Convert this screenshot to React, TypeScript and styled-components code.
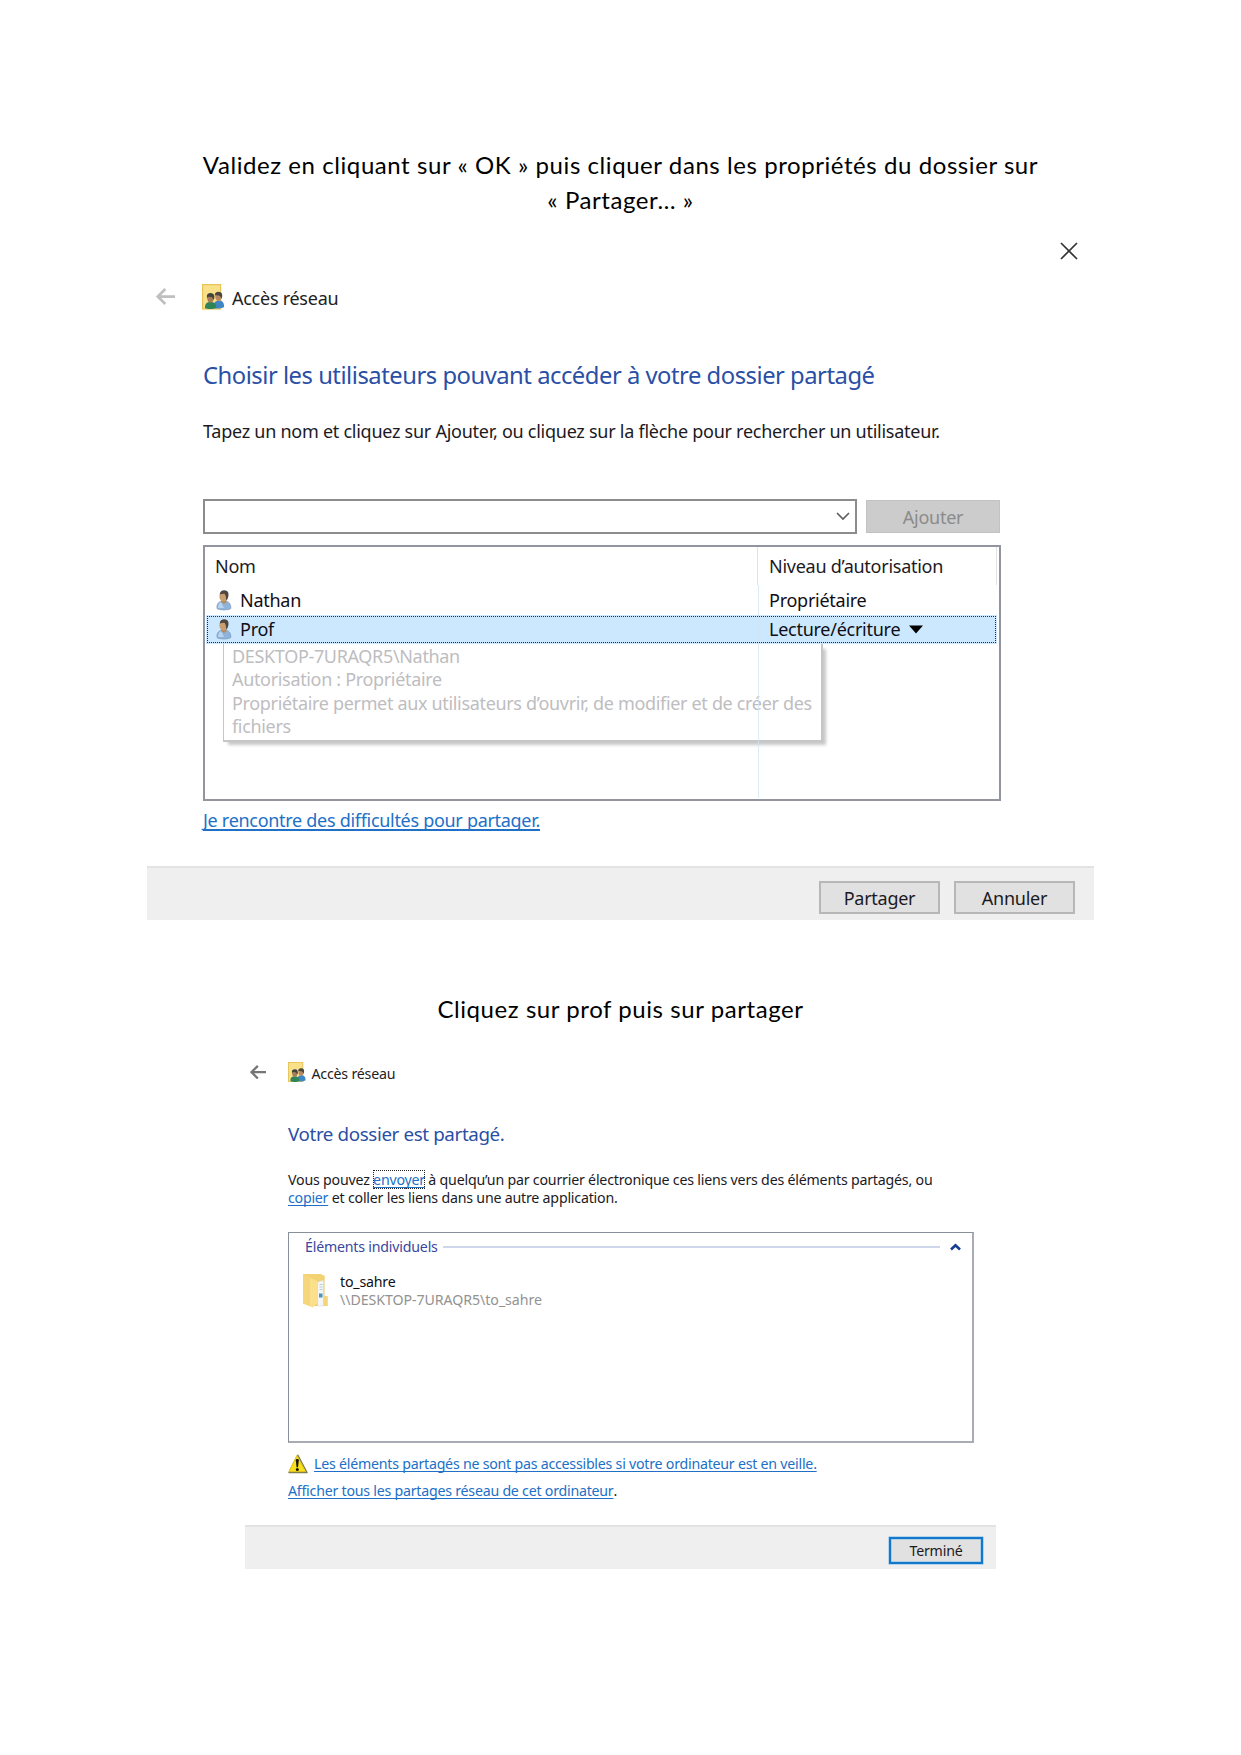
import React from 'react';
import styled, { createGlobalStyle, css } from 'styled-components';

const ui = css`
  font-family: 'Noto Sans', 'Open Sans', sans-serif;
  letter-spacing: -0.0145em;
  font-variant-ligatures: none;
`;

const GlobalStyle = createGlobalStyle`
  *, *::before, *::after { box-sizing: border-box; }
  body { margin: 0; background: #fff; }
  p, h1, h2 { margin: 0; font-weight: 400; }
`;

const Page = styled.main`
  width: 1241px;
  height: 1755px;
  padding-top: 147px;
  background: #fff;
  overflow: hidden;
`;

const Caption = styled.p`
  font-family: Lato, sans-serif;
  font-size: 24px;
  height: 70px;
  line-height: 35px;
  letter-spacing: 0.57px;
  text-align: center;
  color: #000;
  white-space: nowrap;
`;

const LowerCaption = styled(Caption)`
  height: 35px;
  margin-top: 71px;
`;

/* ---------- shared dialog parts ---------- */

const Dialog = styled.section<{ $left: number; $width: number; $size: number }>`
  ${ui}
  display: flex;
  flex-direction: column;
  margin-left: ${(p) => p.$left}px;
  width: ${(p) => p.$width}px;
  font-size: ${(p) => p.$size}px;
  color: #1c1a1f;
  white-space: nowrap;
`;

const CloseBar = styled.div`
  display: flex;
  justify-content: flex-end;
  align-items: center;
  height: 67px;
  padding-right: 16px;
`;

const Header = styled.header<{ $height: number; $indent: number; $arrowCol: number; $gap: number; $top?: number }>`
  display: grid;
  grid-template-columns: ${(p) => p.$arrowCol}px auto 1fr;
  align-items: center;
  height: ${(p) => p.$height}px;
  margin-top: ${(p) => p.$top ?? 0}px;
  padding-left: ${(p) => p.$indent}px;
  svg { display: block; }
  span { padding: 2px 0 0 ${(p) => p.$gap}px; color: #222; }
`;

const Body = styled.div<{ $indent: number; $height: number }>`
  display: flex;
  flex-direction: column;
  align-items: flex-start;
  padding-left: ${(p) => p.$indent}px;
  height: ${(p) => p.$height}px;
`;

const Title = styled.h1<{ $size: number; $line: number; $top: number }>`
  margin-top: ${(p) => p.$top}px;
  font-size: ${(p) => p.$size}px;
  line-height: ${(p) => p.$line}px;
  letter-spacing: -0.0205em;
  color: #2a4fa5;
`;

const Text = styled.p<{ $line: number; $top: number }>`
  margin-top: ${(p) => p.$top}px;
  line-height: ${(p) => p.$line}px;
`;

const Link = styled.a<{ $thick?: number }>`
  color: #2170c8;
  letter-spacing: -0.0165em;
  text-decoration: underline;
  text-decoration-thickness: ${(p) => p.$thick ?? 1}px;
  text-decoration-skip-ink: none;
  text-underline-offset: 2px;
`;

const FocusLink = styled(Link)`
  outline: 1px dotted #222;
  outline-offset: -1px;
`;

const Footer = styled.footer<{ $height: number; $top: number; $right: number; $gap?: number }>`
  display: flex;
  justify-content: flex-end;
  gap: ${(p) => p.$gap ?? 0}px;
  height: ${(p) => p.$height}px;
  padding: ${(p) => p.$top}px ${(p) => p.$right}px 0 0;
  border-top: 2px solid #e3e3e3;
  background: #efefef;
`;

const Button = styled.button<{ $w: number; $h: number; $kind?: 'disabled' | 'default' }>`
  ${ui}
  display: flex;
  align-items: center;
  justify-content: center;
  width: ${(p) => p.$w}px;
  height: ${(p) => p.$h}px;
  padding: 1px 0 0;
  font-size: inherit;
  line-height: 1;
  color: #1c1a1f;
  background: #e1e1e1;
  border: 2px solid #b7b7b7;
  border-radius: 0;
  ${(p) =>
    p.$kind === 'disabled' &&
    css`
      color: #8b8b8b;
      background: #cccccc;
      border: 1px solid #c2c2c2;
    `}
  ${(p) =>
    p.$kind === 'default' &&
    css`
      border: 2px solid #1377ca;
      box-shadow: 0 0 0 0.5px #7cbcf0, inset 0 0 0 0.5px #7cbcf0;
    `}
`;

/* ---------- user picker ---------- */

const PickerRow = styled.div`
  display: flex;
  align-items: flex-start;
  gap: 9px;
  margin-top: 55px;
`;

const Combo = styled.div`
  display: flex;
  align-items: center;
  justify-content: flex-end;
  width: 654px;
  height: 35px;
  padding-right: 5px;
  border: 2px solid #8c8c8c;
`;

const AddSlot = styled.div`
  padding-top: 1px;
`;

const UserList = styled.div`
  position: relative;
  width: 798px;
  height: 256px;
  margin-top: 11px;
  border: 2px solid #92959d;
  &::after {
    content: '';
    position: absolute;
    left: 553px;
    top: 38px;
    bottom: 1px;
    width: 1px;
    background: #cfe4f6;
    opacity: 0.75;
  }
`;

const Columns = styled.div`
  display: grid;
  grid-template-columns: 552px 1fr;
  margin: 0 2px 0 1px;
`;

const ColumnHead = styled.div<{ $pad: number }>`
  height: 38px;
  line-height: 38px;
  padding-left: ${(p) => p.$pad}px;
  border-right: 1px solid #e2e2e2;
`;

const UserRow = styled(Columns)<{ $selected?: boolean }>`
  align-items: center;
  height: ${(p) => (p.$selected ? 29 : 30)}px;
  padding-bottom: ${(p) => (p.$selected ? 1 : 0)}px;
  color: #100e14;
  ${(p) =>
    p.$selected &&
    css`
      background: #cce8ff;
      outline: 1px dotted #1f2c38;
      outline-offset: -2px;
    `}
`;

const UserName = styled.div`
  display: flex;
  align-items: center;
  gap: 8px;
  padding-left: 10px;
`;

const Level = styled.div`
  display: flex;
  align-items: center;
  gap: 9px;
  padding-left: 11px;
`;

const Tooltip = styled.div`
  position: absolute;
  left: 18px;
  top: 97px;
  width: 600px;
  height: 98px;
  padding: 1px 0 0 8px;
  line-height: 23.3px;
  letter-spacing: -0.0185em;
  color: #bebdbf;
  background: #fff;
  border: solid #c6c6c6;
  border-width: 0 2px 2px 1px;
  box-shadow: 4px 4px 3px -1px rgba(0, 0, 0, 0.22);
  clip-path: inset(0 -10px -10px 0);
`;

/* ---------- shared item list ---------- */

const ItemBox = styled.div`
  width: 686px;
  height: 211px;
  margin-top: 24px;
  border: 1px solid #8a909b;
  border-right: 2px solid #a9acb4;
  border-bottom: 2px solid #a9acb4;
`;

const GroupHead = styled.div`
  display: flex;
  align-items: center;
  height: 28px;
  padding: 0 11px 0 16px;
  color: #39479c;
`;

const GroupRule = styled.i`
  flex: 1;
  height: 2px;
  margin: 0 10px 0 5px;
  background: #ced8ea;
`;

const Item = styled.div`
  display: flex;
  gap: 12px;
  padding: 12px 0 0 13px;
  line-height: 18.4px;
  color: #100e14;
`;

const ItemPath = styled.div`
  color: #929292;
  letter-spacing: -0.005em;
`;

const Notice = styled.div`
  display: flex;
  align-items: center;
  gap: 6px;
  height: 20px;
  margin-top: 11px;
`;

/* ---------- drawings ---------- */

const BackArrow = ({ w, color }: { w: number; color: string }) => (
  <svg width={w} height={w * 0.9} viewBox="0 0 19 17" fill="none" stroke={color} strokeWidth="2.7">
    <path d="M19 8.5H2M9.3 1 1.8 8.5l7.5 7.5" />
  </svg>
);

const ShareIcon = ({ w }: { w: number }) => (
  <svg width={w} height={w * 1.16} viewBox="0 0 22 25.5">
    <rect x="0.6" y="0.6" width="18" height="24.4" fill="#f9e18a" stroke="#e6c458" strokeWidth="1.2" />
    <path d="M11.5 24c-.4-5 1.800-7.500 5.500-7.500s5.300 2.700 5 6.500c-2 1.500-7 2-10.500 1z" fill="#3f86c4" />
    <ellipse cx="16.400" cy="12.800" rx="3.100" ry="4.100" fill="#b98a62" />
    <path d="M12.900 11.500c-.4-2.800 1.500-3.900 3.700-3.800 2.700.1 4.100 1.900 3.600 4.900l-1 2.500c-.3-3-1.800-4.200-6.300-3.600z" fill="#4a4640" />
    <path d="M3 24.300c-.3-4.700 1.800-6.400 5.400-6.400s6.200 1.800 5.800 5.900c-2 1.500-8.200 1.700-11.200.5z" fill="#2f8458" />
    <ellipse cx="8.500" cy="14.600" rx="3.100" ry="4.100" fill="#a97b58" />
    <path d="M4.900 13.200c-.4-2.900 1.500-4.200 3.900-4.100 2.800.1 4.100 2.100 3.500 5.100l-.9 1.800c-.3-2.600-2-3.800-5.600-3.100l-.4 1.800z" fill="#44443f" />
  </svg>
);

const UserIcon = () => (
  <svg width="16" height="22" viewBox="0 0 16 22">
    <path d="M1 19.500C.5 14.500 3 12 8 12s7 3 6.800 7.500c-1.800 1.900-12 1.900-13.800 0z" fill="#8fb4dc" stroke="#7595b8" strokeWidth=".7" />
    <path d="M2 19c0-3 1-5 3-6l3 6z" fill="#b9d4ef" />
    <path d="M5 11h5l.5 2.500L8 15l-2.500-1.500z" fill="#b98a5c" />
    <ellipse cx="7.300" cy="7.400" rx="3.900" ry="5.200" fill="#c99e70" />
    <path d="M3.700 5.500C4 2.500 6 1.200 8.400 1.300c3.300.1 4.600 2.600 4 5.700-.4 2.200-1.200 3.900-2.200 4.800.1-3-.4-5.500-1.700-7-1.800-.1-3.400.1-4.800.7z" fill="#4f4640" />
  </svg>
);

const FolderIcon = () => (
  <svg width="26" height="35" viewBox="0 0 26 35">
    <path d="M1 1h16.500l5 2v20l3 .5V33H9z" fill="#eecb62" />
    <path d="M15.500 9l6-2v26h-6z" fill="#f3f5f7" stroke="#cfd3d6" strokeWidth=".5" />
    <path d="M17 20.500h3.500v4H17z" fill="#4f93b8" />
    <path d="M17.500 11.500h3M17.500 14h3M17.500 16.500h3" stroke="#b6cfd8" />
    <path d="M1 1l14.800 6.500V30l-5 4.500L1 30.500z" fill="#fbdf8b" />
    <path d="M1 1h17.500l4 2v3.500l-6.700 2L1 1z" fill="#f2d272" />
    <path d="M1 1l7 3v29.300L1 30.500z" fill="#f6d67c" />
    <path d="M22 23h3.500v10H22z" fill="#f5d57a" />
  </svg>
);

const WarningIcon = () => (
  <svg width="20" height="20" viewBox="0 0 20 20">
    <path d="M9.700 1.200 19 18.600H1z" fill="#7a774f" stroke="#7a774f" strokeWidth="1.400" strokeLinejoin="round" />
    <path d="M9 1.500 17.600 17.600H1z" fill="#f8e11c" stroke="#e2c41a" strokeWidth="1" strokeLinejoin="round" />
    <path d="M7.800 6.300c0-1.600 3-1.600 3 0l-.8 7H8.600z" fill="#16140a" />
    <circle cx="9.300" cy="15.500" r="1.500" fill="#16140a" />
  </svg>
);

export default function App() {
  return (
    <>
      <GlobalStyle />
      <Page>
        <Caption>
          Validez en cliquant sur «&nbsp;OK&nbsp;» puis cliquer dans les propriétés du dossier sur
          <br />
          «&nbsp;Partager…&nbsp;»
        </Caption>

        <Dialog $left={147} $width={947} $size={18}>
          <CloseBar>
            <svg width="18" height="18" viewBox="0 0 18 18" stroke="#333" strokeWidth="1.700">
              <path d="M1 1l16 16M17 1L1 17" />
            </svg>
          </CloseBar>
          <Header $height={26} $indent={9} $arrowCol={46} $gap={8}>
            <BackArrow w={19} color="#bfbfbf" />
            <ShareIcon w={22} />
            <span>Accès réseau</span>
          </Header>
          <Body $indent={56} $height={556}>
            <Title $size={23.8} $line={34} $top={48}>
              Choisir les utilisateurs pouvant accéder à votre dossier partagé
            </Title>
            <Text $line={25} $top={27}>
              Tapez un nom et cliquez sur Ajouter, ou cliquez sur la flèche pour rechercher un utilisateur.
            </Text>
            <PickerRow>
              <Combo>
                <svg width="14" height="9" viewBox="0 0 14 9" fill="none" stroke="#606060" strokeWidth="1.700">
                  <path d="M1 1l6 6 6-6" />
                </svg>
              </Combo>
              <AddSlot>
                <Button $w={134} $h={33} $kind="disabled">
                  Ajouter
                </Button>
              </AddSlot>
            </PickerRow>
            <UserList>
              <Columns>
                <ColumnHead $pad={9}>Nom</ColumnHead>
                <ColumnHead $pad={11}>Niveau d’autorisation</ColumnHead>
              </Columns>
              <UserRow>
                <UserName>
                  <UserIcon />
                  Nathan
                </UserName>
                <Level>Propriétaire</Level>
              </UserRow>
              <UserRow $selected>
                <UserName>
                  <UserIcon />
                  Prof
                </UserName>
                <Level>
                  Lecture/écriture
                  <svg width="14" height="9" viewBox="0 0 14 9">
                    <path d="M0 .5h14L7 8.500z" />
                  </svg>
                </Level>
              </UserRow>
              <Tooltip>
                DESKTOP-7URAQR5\Nathan
                <br />
                Autorisation : Propriétaire
                <br />
                Propriétaire permet aux utilisateurs d’ouvrir, de modifier et de créer des
                <br />
                fichiers
              </Tooltip>
            </UserList>
            <Text $line={24} $top={7}>
              <Link $thick={2}>Je rencontre des difficultés pour partager.</Link>
            </Text>
          </Body>
          <Footer $height={54} $top={13} $right={19} $gap={14}>
            <Button $w={121} $h={33}>
              Partager
            </Button>
            <Button $w={121} $h={33}>
              Annuler
            </Button>
          </Footer>
        </Dialog>

        <LowerCaption>Cliquez sur prof puis sur partager</LowerCaption>

        <Dialog $left={245} $width={751} $size={14.2}>
          <Header $top={35} $height={22} $indent={5} $arrowCol={38} $gap={6}>
            <BackArrow w={16} color="#757575" />
            <ShareIcon w={17.5} />
            <span>Accès réseau</span>
          </Header>
          <Body $indent={43} $height={442}>
            <Title $size={18.8} $line={26} $top={38}>
              Votre dossier est partagé.
            </Title>
            <Text $line={18.4} $top={24}>
              Vous pouvez <FocusLink>envoyer</FocusLink> à quelqu’un par courrier électronique ces liens vers des
              éléments partagés, ou
              <br />
              <Link>copier</Link> et coller les liens dans une autre application.
            </Text>
            <ItemBox>
              <GroupHead>
                Éléments individuels
                <GroupRule />
                <svg width="11" height="8" viewBox="0 0 11 8" fill="none" stroke="#173c94" strokeWidth="2.600">
                  <path d="M1 6.500l4.500-4.200L10 6.500" />
                </svg>
              </GroupHead>
              <Item>
                <FolderIcon />
                <div>
                  to_sahre
                  <ItemPath>\\DESKTOP-7URAQR5\to_sahre</ItemPath>
                </div>
              </Item>
            </ItemBox>
            <Notice>
              <WarningIcon />
              <Link>Les éléments partagés ne sont pas accessibles si votre ordinateur est en veille.</Link>
            </Notice>
            <Text $line={20} $top={7}>
              <Link>Afficher tous les partages réseau de cet ordinateur</Link>.
            </Text>
          </Body>
          <Footer $height={44} $top={10} $right={13}>
            <Button $w={94} $h={27} $kind="default">
              Terminé
            </Button>
          </Footer>
        </Dialog>
      </Page>
    </>
  );
}
